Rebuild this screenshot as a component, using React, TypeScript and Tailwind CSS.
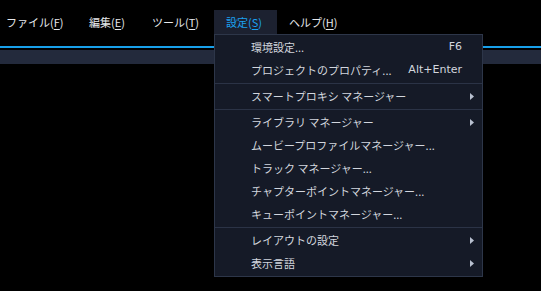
import React from 'react';

type Item =
  | { kind: 'item'; label: string; shortcut?: string; sub?: boolean }
  | { kind: 'sep' };

const items: Item[] = [
  { kind: 'item', label: '環境設定...', shortcut: 'F6' },
  { kind: 'item', label: 'プロジェクトのプロパティ...', shortcut: 'Alt+Enter' },
  { kind: 'sep' },
  { kind: 'item', label: 'スマートプロキシ マネージャー', sub: true },
  { kind: 'sep' },
  { kind: 'item', label: 'ライブラリ マネージャー', sub: true },
  { kind: 'item', label: 'ムービープロファイルマネージャー...' },
  { kind: 'item', label: 'トラック マネージャー...' },
  { kind: 'item', label: 'チャプターポイントマネージャー...' },
  { kind: 'item', label: 'キューポイントマネージャー...' },
  { kind: 'sep' },
  { kind: 'item', label: 'レイアウトの設定', sub: true },
  { kind: 'item', label: '表示言語', sub: true },
];

const menus = [
  { label: 'ファイル', key: 'F', w: 'w-[77px] pl-[6px]' },
  { label: '編集', key: 'E', w: 'w-[63px] pl-3' },
  { label: 'ツール', key: 'T', w: 'w-[74px] pl-3' },
  { label: '設定', key: 'S', w: 'w-[63px] pl-3', active: true },
  { label: 'ヘルプ', key: 'H', w: 'w-[70px] pl-3' },
];

const Arrow = () => (
  <svg width="4" height="7" viewBox="0 0 4 7" className="text-[#b8c0d0]">
    <path d="M0 0 L4 3.5 L0 7 Z" fill="currentColor" />
  </svg>
);

export default function App() {
  return (
    <div
      className="relative w-[541px] h-[291px] bg-black overflow-hidden text-[11px]"
      style={{ fontFamily: '"Noto Sans CJK JP", "Noto Sans", sans-serif' }}
    >
      {/* Menu bar */}
      <div className="flex pt-[10px]">
        {menus.map(m => (
          <div
            key={m.key}
            className={`${m.w} h-[24px] flex items-center ${
              m.active ? 'bg-[#1c2130] text-[#1ba1f2]' : 'text-[#e6e8ec]'
            }`}
          >
            {m.label}(<span className="underline underline-offset-2">{m.key}</span>)
          </div>
        ))}
      </div>

      {/* Toolbar strip */}
      <div className="mt-[12px] h-[2px] bg-[#18a0ea]" />
      <div className="mt-[2px] h-[14px] bg-[#232a3c]" />

      {/* Dropdown */}
      <div className="absolute left-[214px] top-[34px] w-[269px] bg-[#151a27] border border-[#2d3649] py-px text-[#d2d6de]">
        {items.map((it, i) =>
          it.kind === 'sep' ? (
            <div key={i} className="my-px h-px bg-[#2b3346]" />
          ) : (
            <div key={i} className="h-[23px] flex items-center pl-[36px] pr-[20px]">
              <span className="flex-1 whitespace-nowrap">{it.label}</span>
              {it.shortcut && (
                <span className="whitespace-nowrap font-['DejaVu_Sans',sans-serif]">{it.shortcut}</span>
              )}
              {it.sub && (
                <span className="mr-[-12px]">
                  <Arrow />
                </span>
              )}
            </div>
          )
        )}
      </div>
    </div>
  );
}
